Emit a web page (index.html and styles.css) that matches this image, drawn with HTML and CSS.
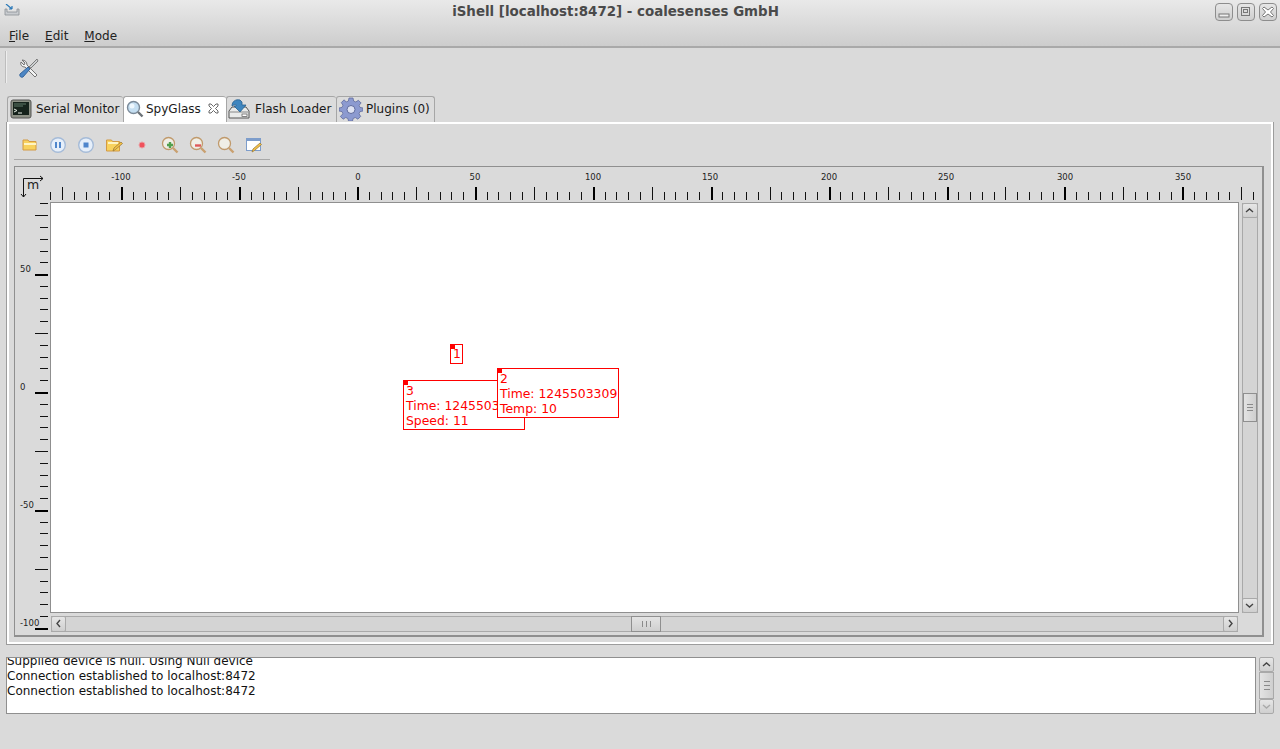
FILE: index.html
```html
<!DOCTYPE html>
<html lang="en">
<head>
<meta charset="utf-8">
<title>iShell</title>
<link rel="stylesheet" href="styles.css">
</head>
<body>
<div class="app">
  <header class="chrome">
    <div class="titlebar">
      <svg class="app-icon" viewBox="0 0 16 12" width="16" height="12"><path d="M1 5v6h14V5h-2v3H3V5z" fill="#c9ccd0" stroke="#8b8f94" stroke-width=".8"/><path d="M2 0l6 5M8 5V2M8 5H5" stroke="#2a78b8" stroke-width="1.2" fill="none"/></svg>
      <div class="title">iShell [localhost:8472] - coalesenses GmbH</div>
      <div class="wm-buttons">
        <span class="wm-btn"><svg viewBox="0 0 16 16" width="16" height="16"><rect x="3" y="10" width="10" height="3" fill="#eee" stroke="#777"/></svg></span>
        <span class="wm-btn"><svg viewBox="0 0 16 16" width="16" height="16"><rect x="3.5" y="3.5" width="8" height="8" fill="none" stroke="#777"/><rect x="5.5" y="5.5" width="4" height="3" fill="none" stroke="#777"/></svg></span>
        <span class="wm-btn"><svg viewBox="0 0 16 16" width="16" height="16"><path d="M4 3l4 3 4-3 1.500 1.500-3 3.500 3 3.500-1.500 1.500-4-3-4 3-1.500-1.500 3-3.500-3-3.500z" fill="#fff" stroke="#777"/></svg></span>
      </div>
    </div>
    <nav class="menubar">
      <span class="menu"><u>F</u>ile</span>
      <span class="menu"><u>E</u>dit</span>
      <span class="menu"><u>M</u>ode</span>
    </nav>
  </header>

  <div class="toolbar">
    <span class="handle"></span>
    <svg class="tool" viewBox="0 0 22 22" width="22" height="22">
      <path d="M5 3l3 3-1 2-3-3c-1 3 1 5 4 5l10 10 2-2L10 8c0-3-2-5-5-5z" fill="#f2f3f3" stroke="#666" stroke-width=".9"/>
      <path d="M20 2l1 2-7 7-2-1z" fill="#cdd0d2" stroke="#666" stroke-width=".8"/>
      <path d="M11 10l2 2-7 8c-2 1-4-1-3-3z" fill="#4d86c4" stroke="#2c5e96" stroke-width=".9"/>
    </svg>
  </div>

  <div class="tabs">
    <div class="tab tab-serial">
      <svg class="tab-icon" viewBox="0 0 22 22" width="22" height="22"><rect x="1" y="2" width="20" height="18" rx="2" fill="#8d9186" stroke="#555"/><rect x="3" y="4" width="16" height="13" fill="#16231c"/><path d="M4 6h12M4 8h9" stroke="#5f7a68"/><path d="M4 11l3 1.500-3 1.500M8 15h4" stroke="#e8efe6" fill="none"/></svg>
      <span>Serial Monitor</span>
    </div>
    <div class="tab tab-spy">
      <svg class="tab-icon-sm" viewBox="0 0 18 18" width="18" height="18"><circle cx="7.500" cy="7.500" r="6" fill="#c5dff2" stroke="#7b8a99" stroke-width="1.400"/><circle cx="6" cy="6" r="2.500" fill="#eef7fd"/><path d="M12 12l4.500 4.500" stroke="#6d7378" stroke-width="2.400"/></svg>
      <span>SpyGlass</span>
      <svg class="tab-close" viewBox="0 0 11 11" width="11" height="11"><path d="M1 1h2l2.500 2.500L8 1h2v2L7.500 5.500 10 8v2H8L5.500 7.500 3 10H1V8l2.500-2.500L1 3z" fill="#fff" stroke="#444" stroke-width=".8"/></svg>
    </div>
    <div class="tab tab-flash">
      <svg class="tab-icon" viewBox="0 0 22 22" width="22" height="22"><path d="M1 13l3-4h14l3 4v7H1z" fill="#e9ebea" stroke="#555"/><path d="M2 14h18" stroke="#888"/><rect x="14" y="16" width="5" height="2.500" fill="#fff" stroke="#555" stroke-width=".7"/><path d="M4 8C4 3 8 1 12 2l2 2v3h4l-6 7-6-6h2c0-2 0-2-4 0z" fill="#3f86bf" stroke="#28618f" stroke-width=".8"/></svg>
      <span>Flash Loader</span>
    </div>
    <div class="tab tab-plugins">
      <svg class="tab-icon" viewBox="0 0 24 24" width="24" height="24"><path d="M10 1h4l.6 3 2.200 1 2.600-1.700 2.800 2.800L20 8.200l1 2.200 3 .6v3l-3 .6-1 2.200 1.700 2.600-2.800 2.800-2.600-1.700-2.200 1-.6 2.600h-4l-.6-2.600-2.200-1-2.600 1.700-2.800-2.800L4 16.800l-1-2.200-3-.6v-3l3-.6 1-2.200-1.700-2.600 2.800-2.800L7.200 5l2.200-1z" fill="#8c9ad0" stroke="#5f6b9d" stroke-width=".8"/><circle cx="12" cy="12.500" r="4" fill="#dfe3f3" stroke="#5f6b9d"/></svg>
      <span>Plugins (0)</span>
    </div>
  </div>

  <section class="pane">
    <div class="actions">
      <svg class="act" viewBox="0 0 18 18" width="18" height="18"><path d="M2 4h5l1 1.500h7V14H2z" fill="#f8d25e" stroke="#d39a45"/><path d="M3 8h12" stroke="#fff4c4" stroke-width="2"/></svg>
      <svg class="act" viewBox="0 0 18 18" width="18" height="18"><circle cx="9" cy="9" r="7.300" fill="#e6effa" stroke="#a5bbd8" stroke-width="1.400"/><path d="M7 6v6M11 6v6" stroke="#4f86cc" stroke-width="2"/></svg>
      <svg class="act" viewBox="0 0 18 18" width="18" height="18"><circle cx="9" cy="9" r="7.300" fill="#e6effa" stroke="#a5bbd8" stroke-width="1.400"/><rect x="6.500" y="6.500" width="5" height="5" fill="#4f86cc"/></svg>
      <svg class="act" viewBox="0 0 18 18" width="18" height="18"><path d="M1.500 4h5l1 1.500h7V15h-13z" fill="#f8d25e" stroke="#d39a45"/><path d="M3 7h10" stroke="#fff4c4" stroke-width="2"/><path d="M8 15l1-3 7-6 1.500 1.500-7 6z" fill="#f6c244" stroke="#9a7b3c" stroke-width=".8"/></svg>
      <svg class="act" viewBox="0 0 18 18" width="18" height="18"><circle cx="9" cy="9" r="3" fill="#f0525c" stroke="#e9a0a4"/></svg>
      <svg class="act" viewBox="0 0 18 18" width="18" height="18"><circle cx="7.500" cy="7.500" r="6" fill="#f0eee6" stroke="#c09a6c" stroke-width="1.300"/><path d="M12 12l4.500 4.500" stroke="#c9a070" stroke-width="2.400"/><path d="M6 9h6M9 6v6" stroke="#52a04e" stroke-width="2.400"/></svg>
      <svg class="act" viewBox="0 0 18 18" width="18" height="18"><circle cx="7.500" cy="7.500" r="6" fill="#f0eee6" stroke="#c09a6c" stroke-width="1.300"/><path d="M12 12l4.500 4.500" stroke="#c9a070" stroke-width="2.400"/><path d="M6 9.500h6" stroke="#de5a5a" stroke-width="2.400"/></svg>
      <svg class="act" viewBox="0 0 18 18" width="18" height="18"><circle cx="7.500" cy="7.500" r="6" fill="#f0eee6" stroke="#c09a6c" stroke-width="1.300"/><path d="M12 12l4.500 4.500" stroke="#c9a070" stroke-width="2.400"/></svg>
      <svg class="act" viewBox="0 0 18 18" width="18" height="18"><rect x="1.500" y="2.500" width="14" height="12" fill="#fff" stroke="#7d9dcb"/><path d="M2 4h13" stroke="#7d9dcb" stroke-width="2"/><path d="M7 16l1-3 7-6 1.500 1.500-7 6z" fill="#f6c244" stroke="#9a7b3c" stroke-width=".8"/></svg>
    </div>

    <div class="viewer">
      <div class="corner">
        <svg class="axes" viewBox="0 0 24 24" width="24" height="24"><path d="M1.500 23V4.500H21M18 2l3 2.500L18 7M-1 20l2.500 3L4 20" fill="none" stroke="#111"/></svg>
        <span class="unit">m</span>
      </div>
      <svg id="ruler-top" class="ruler-top" viewBox="50 167 1211 35">
        <g class="ruler-labels" text-anchor="middle">
          <text x="121" y="180">-100</text><text x="239" y="180">-50</text><text x="358" y="180">0</text><text x="475" y="180">50</text><text x="593" y="180">100</text><text x="710" y="180">150</text><text x="829" y="180">200</text><text x="946" y="180">250</text><text x="1065" y="180">300</text><text x="1183" y="180">350</text>
        </g>
      </svg>
      <svg id="ruler-left" class="ruler-left" viewBox="15 202 35 435">
        <g class="ruler-labels" text-anchor="start">
          <text x="20" y="272">50</text><text x="20" y="390">0</text><text x="20" y="508">-50</text><text x="20" y="626">-100</text>
        </g>
      </svg>
      <div class="canvas">
        <div class="marker m1"><i class="dot"></i>1</div>
        <div class="marker m3"><i class="dot"></i>3<br>Time: 1245503309<br>Speed: 11</div>
        <div class="marker m2"><i class="dot"></i>2<br>Time: 1245503309<br>Temp: 10</div>
      </div>
      <div class="vscroll-wrap">
        <div class="vscroll">
          <span class="sb-btn"><svg viewBox="0 0 13 13" width="13" height="13"><path d="M3 8l3.500-3L10 8" class="arrow"/></svg></span>
          <div class="v-track"><span class="v-thumb"><i></i><i></i><i></i></span></div>
          <span class="sb-btn"><svg viewBox="0 0 13 13" width="13" height="13"><path d="M3 5l3.500 3L10 5" class="arrow"/></svg></span>
        </div>
      </div>
      <div class="hscroll-wrap">
        <div class="hscroll">
          <span class="sb-btn"><svg viewBox="0 0 13 13" width="13" height="13"><path d="M8 3L5 6.500 8 10" class="arrow"/></svg></span>
          <div class="h-track"><span class="h-thumb"><i></i><i></i><i></i></span></div>
          <span class="sb-btn"><svg viewBox="0 0 13 13" width="13" height="13"><path d="M5 3l3 3.500L5 10" class="arrow"/></svg></span>
        </div>
      </div>
    </div>
  </section>

  <section class="log-row">
    <div class="log">
      <div class="log-text">Supplied device is null. Using Null device<br>Connection established to localhost:8472<br>Connection established to localhost:8472</div>
    </div>
    <div class="log-scroll">
      <span class="sb-btn"><svg viewBox="0 0 13 13" width="13" height="13"><path d="M3 8l3.500-3L10 8" class="arrow"/></svg></span>
      <span class="log-thumb"><i></i><i></i><i></i></span>
      <span class="sb-btn sb-off"><svg viewBox="0 0 13 13" width="13" height="13"><path d="M3 5l3.500 3L10 5" class="arrow"/></svg></span>
    </div>
  </section>
</div>
<script src="ruler.js"></script>
</body>
</html>
```
FILE: styles.css
```css
* { box-sizing: border-box; }
html, body { margin: 0; height: 100%; overflow: hidden; }
body { background: #dadada; font-family: "DejaVu Sans", sans-serif; font-size: 12px; color: #1a1a1a; }
.app { width: 1280px; height: 749px; display: flex; flex-direction: column; }

.chrome { height: 48px; background: linear-gradient(#e9e9e9, #cdcdcd); border-bottom: 2px solid #a9a9a9; }
.titlebar { height: 23px; position: relative; display: flex; align-items: center; padding-left: 4px; }
.app-icon { display: block; margin-top: -3px; }
.title { position: absolute; left: 0; right: 49px; top: 4px; text-align: center; font-weight: bold; font-size: 13.4px; line-height: 16px; color: #4a4a4a; }
.wm-buttons { margin-left: auto; display: flex; gap: 4px; padding-right: 3px; margin-top: 1px; }
.wm-btn { width: 18px; height: 18px; border: 1px solid #8d8d8d; border-radius: 4px; background: linear-gradient(#e6e6e6, #cfcfcf); display: block; }
.wm-btn svg { display: block; }
.menubar { display: flex; gap: 16px; padding: 5px 9px 0; font-size: 12px; line-height: 16px; color: #222; }

.toolbar { height: 48px; display: flex; align-items: flex-start; padding: 3px 0 0 5px; }
.handle { width: 2px; height: 32px; background: #bdbdbd; border-right: 1px solid #eee; }
.tool { display: block; margin: 6px 0 0 10px; }

.tabs { display: flex; height: 26px; padding-left: 7px; position: relative; z-index: 1; }
.tab { display: flex; align-items: center; gap: 4px; height: 26px; padding: 0 0 2px 2px; border: 1px solid #a6a6a6; border-right: 0; border-bottom: 0; border-radius: 3px 3px 0 0; background: #dcdcdc; white-space: nowrap; flex: none; }
.tab-serial { width: 116px; }
.tab-spy { width: 103px; background: #fff; gap: 2px; }
.tab-flash { width: 110px; gap: 5px; padding-left: 1px; }
.tab-plugins { width: 99px; gap: 3px; border-right: 1px solid #a6a6a6; }
.tab-close { margin-left: 5px; }

.pane { margin-left: 6px; width: 1268px; height: 523px; border: 1px solid #9c9c9c; border-top: 0; box-shadow: inset 0 0 0 2px #fff; padding: 9px 9px 7px 7px; display: flex; flex-direction: column; background: #dadada; }
.actions { width: 256px; height: 35px; border-bottom: 1px solid #a8a8a8; display: flex; align-items: flex-start; gap: 10px; padding: 5px 0 0 7px; }
.act { display: block; flex: none; }
.viewer { width: 1250px; height: 471px; margin-top: 6px; border: 2px solid #8f8f8f; border-width: 1px 2px 2px 1px; display: grid; grid-template-columns: 35px 1189px 1fr; grid-template-rows: 35px 411px 1fr; }
.corner { position: relative; }
.axes { position: absolute; left: 7px; top: 7px; overflow: visible; }
.unit { position: absolute; left: 12px; top: 11px; font-size: 12.5px; line-height: 14px; }
.ruler-top { grid-column: 2 / 4; width: 1211px; height: 35px; display: block; }
.ruler-left { grid-column: 1; grid-row: 2 / 4; width: 35px; height: 435px; display: block; }
.ruler-labels { font-family: "DejaVu Sans", sans-serif; font-size: 8.5px; fill: #222; }
.tick { stroke: #111; stroke-width: 1; shape-rendering: crispEdges; }
.tick-big { stroke: #000; stroke-width: 2; shape-rendering: crispEdges; }

.canvas { position: relative; background: #fff; border: 1px solid #8f8f8f; overflow: hidden; grid-column: 2; grid-row: 2; }
.marker { position: absolute; background: #fff; border: 1px solid #f00; color: #f00; font-size: 12.4px; line-height: 15px; padding: 2px 2px 0 2px; white-space: nowrap; }
.dot { position: absolute; left: 0; top: 0; width: 4px; height: 4px; background: #f00; }
.m1 { left: 399px; top: 141px; width: 13px; height: 20px; padding: 1px 0 0 2px; }
.m2 { left: 446px; top: 165px; width: 122px; height: 50px; }
.m3 { left: 352px; top: 177px; width: 122px; height: 50px; overflow: hidden; }

.sb-btn { display: block; width: 15px; height: 15px; border: 1px solid #a9a9a9; border-radius: 2px; background: linear-gradient(#e6e6e6, #cfcfcf); flex: none; }
.sb-btn svg { display: block; }
.sb-off .arrow { stroke: #aaa; }
.arrow { fill: none; stroke: #444; stroke-width: 1.400; }
.vscroll-wrap { grid-column: 3; grid-row: 2; padding: 0 0 0 3px; }
.vscroll { height: 410px; display: flex; flex-direction: column; margin-top: 1px; border-left: 1px solid #a9a9a9; border-right: 1px solid #a9a9a9; width: 16px; background: #d4d4d4; }
.vscroll .sb-btn { margin-left: -1px; width: 16px; }
.v-track { flex: 1; position: relative; }
.v-thumb { position: absolute; left: 0; right: 0; top: 175px; height: 29px; }
.v-thumb, .h-thumb, .log-thumb { display: flex; align-items: center; justify-content: center; gap: 2px; border: 1px solid #8f8f8f; background: linear-gradient(90deg, #e3e3e3, #cfcfcf); }
.v-thumb, .log-thumb { flex-direction: column; }
.v-thumb i, .log-thumb i { display: block; width: 6px; height: 1px; background: #8a8a8a; }
.hscroll-wrap { grid-column: 2; grid-row: 3; padding: 3px 0 0 1px; }
.hscroll { height: 16px; display: flex; width: 1187px; border-top: 1px solid #a9a9a9; border-bottom: 1px solid #a9a9a9; background: #d4d4d4; }
.hscroll .sb-btn { margin-top: -1px; height: 16px; }
.h-track { flex: 1; position: relative; }
.h-thumb { position: absolute; top: -1px; bottom: -1px; left: 565px; width: 30px; gap: 3px; background: linear-gradient(#e3e3e3, #cfcfcf); }
.h-thumb i { display: block; width: 1px; height: 6px; background: #8a8a8a; }

.log-row { display: flex; gap: 3px; margin: 12px 0 0 6px; height: 57px; }
.log { width: 1250px; border: 1px solid #8f8f8f; background: #fff; overflow: hidden; }
.log-text { margin-top: -4px; font-size: 12px; line-height: 15px; color: #111; }
.log-scroll { width: 15px; display: flex; flex-direction: column; }
.log-thumb { flex: 1; background: linear-gradient(90deg, #e3e3e3, #cfcfcf); border-color: #a9a9a9; gap: 3px; }
```
FILE: ruler.js
```js
(function () {
  var NS = 'http://www.w3.org/2000/svg';
  function add(svg, cls, x1, y1, x2, y2) {
    var l = document.createElementNS(NS, 'line');
    l.setAttribute('class', cls);
    l.setAttribute('x1', x1); l.setAttribute('y1', y1);
    l.setAttribute('x2', x2); l.setAttribute('y2', y2);
    svg.appendChild(l);
  }
  var step = 117.9 / 10;
  var top = document.getElementById('ruler-top');
  for (var k = -26; k <= 76; k++) {
    var px = Math.round(357 + k * step);
    if (px < 50 || px > 1256) continue;
    var big = k % 10 === 0, mid = k % 5 === 0;
    add(top, big ? 'tick-big' : 'tick', big ? px + 1 : px + 0.5, mid ? 187 : 192, big ? px + 1 : px + 0.5, 200);
  }
  var left = document.getElementById('ruler-left');
  for (var j = -20; j <= 17; j++) {
    var py = Math.round(392 - j * step);
    if (py < 202 || py > 635) continue;
    var bigv = j % 10 === 0, midv = j % 5 === 0;
    add(left, bigv ? 'tick-big' : 'tick', midv ? 35 : 40, py + 0.5, 48, py + 0.5);
  }
})();
```
